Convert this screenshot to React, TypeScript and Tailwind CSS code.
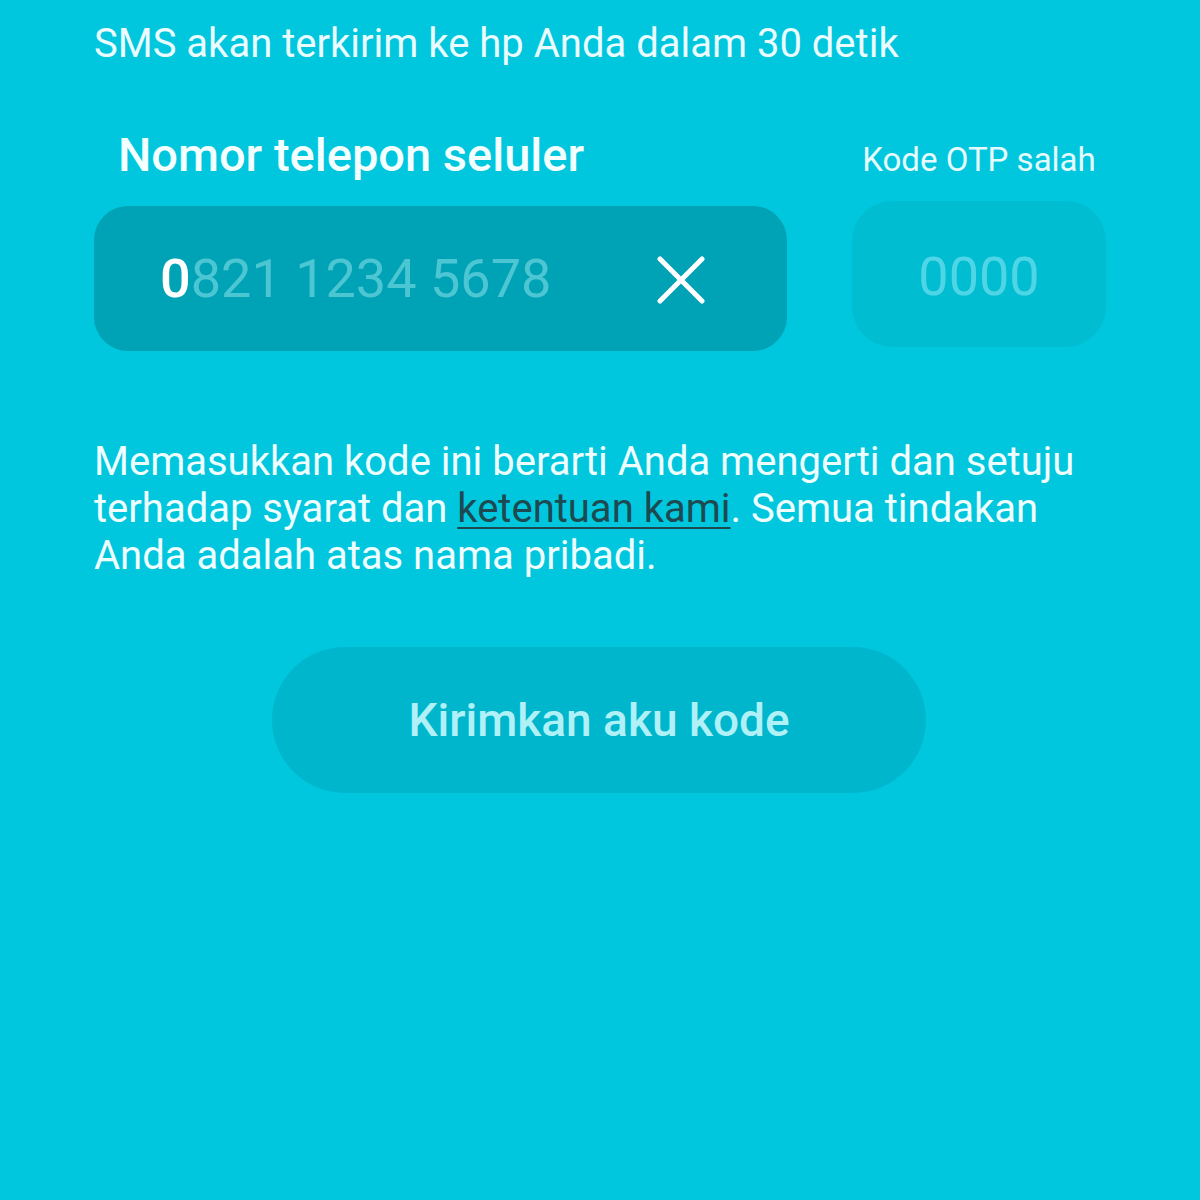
import React from "react";

export default function App() {
  return (
    <div
      className="w-[1200px] h-[1200px] bg-[#00c7de] text-white overflow-hidden"
      style={{ fontFamily: "Roboto, 'Noto Sans', sans-serif" }}
    >
      <div className="pl-[94px] pr-[94px] pt-[20px]">
        <p className="text-[40px] leading-[48px] text-[#eafcff] whitespace-nowrap">
          SMS akan terkirim ke hp Anda dalam 30 detik
        </p>

        <div className="mt-[62px] flex items-end justify-between">
          <div className="w-[693px]">
            <p className="pl-[24px] text-[47px] leading-[50px] font-medium text-[#f4ffff] whitespace-nowrap">
              Nomor telepon seluler
            </p>
          </div>
          <div className="w-[254px] flex justify-center">
            <p className="text-[33px] leading-[40px] text-[#e6fbfd] whitespace-nowrap">Kode OTP salah</p>
          </div>
        </div>

        <div className="mt-[26px] flex items-center justify-between">
          <div className="w-[693px] h-[145px] rounded-[34px] bg-[#00a3b5] flex items-center pl-[66px] pr-[82px] justify-between">
            <span className="text-[54px] leading-none whitespace-nowrap">
              <span className="text-white font-medium">0</span>
              <span className="text-[#4dc6d4]">821 1234 5678</span>
            </span>
            <svg width="48" height="48" viewBox="0 0 48 48" className="mt-[2px]">
              <path d="M3 3 L45 45 M45 3 L3 45" stroke="white" strokeWidth="5" strokeLinecap="round" />
            </svg>
          </div>
          <div className="w-[254px] h-[146px] -mt-[9px] rounded-[40px] bg-[#00bdd2] flex items-center justify-center">
            <span className="mt-[6px] text-[54px] leading-none text-[#4fd6e6]">0000</span>
          </div>
        </div>

        <p className="mt-[87px] text-[40px] leading-[47px] text-[#effeff]">
          Memasukkan kode ini berarti Anda mengerti dan setuju terhadap syarat dan{" "}
          <span className="text-[#1d4a50] underline decoration-[2px] underline-offset-[5px]">
            ketentuan kami
          </span>
          . Semua tindakan Anda adalah atas nama pribadi.
        </p>

        <div className="mt-[68px] flex justify-center pr-[2px]">
          <div className="w-[654px] h-[146px] rounded-full bg-[#00b6cc] flex items-center justify-center">
            <span className="text-[46px] font-medium text-[#b0f1f7] whitespace-nowrap">Kirimkan aku kode</span>
          </div>
        </div>
      </div>
    </div>
  );
}
